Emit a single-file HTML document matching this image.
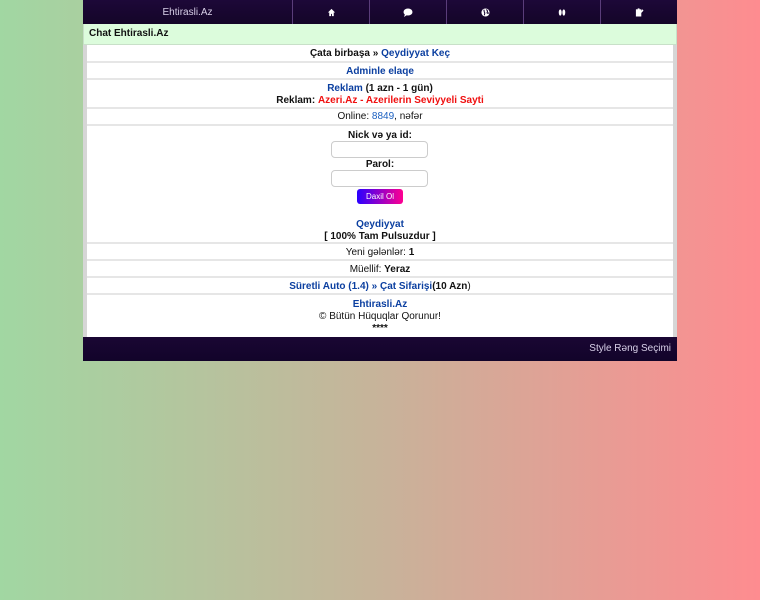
<!DOCTYPE html>
<html><head><meta charset="utf-8"><style>
html,body{margin:0;padding:0;width:760px;height:600px;overflow:hidden}
body{background:linear-gradient(to right,#a1d7a2,#c7b39a 50%,#fe8c90);font-family:"Liberation Sans",Arial,sans-serif;font-size:10px;color:#111}
#wrap{position:absolute;left:83px;top:0;width:594px}
.nav{height:24px;background:linear-gradient(#1d0838,#140528);display:flex}
.nav div{border-left:1px solid #5a3d7a;width:76px;display:flex;align-items:center;justify-content:center}
.nav .brand{border-left:none;width:209px;color:#d8d0e8;font-size:10px}
.hd{height:20px;background:#dcfcdc;border:1px solid #c8e0c8;border-top:none;line-height:20px;padding-left:5px;font-weight:bold;font-size:10px}
.box{background:#fff;border-left:4px solid #d6d6d6;border-right:4px solid #d6d6d6}
.r{border-bottom:2px solid #e6e6e6;text-align:center;box-sizing:border-box}
a{color:#0b3fa0;font-weight:bold;text-decoration:none}
b{color:#111}
.red{color:#f01010;font-weight:bold}
.ab{position:absolute;left:0;right:0;text-align:center;line-height:12px}
.inp{position:absolute;left:244px;width:97px;height:17px;border:1px solid #ccc;border-radius:4px;box-sizing:border-box;background:#fff}
.btn{position:absolute;left:270px;width:46px;height:15px;line-height:15px;border-radius:3px;background:linear-gradient(to right,#2a00ff,#ff0090);color:#fff;font-size:8px;text-align:center}
.ft{height:24px;background:linear-gradient(#1a0633,#12042a);color:#d8d0e8;text-align:right;line-height:24px;padding-right:6px;font-size:10px}
</style></head><body>
<div id="wrap">
<div class="nav">
<div class="brand">Ehtirasli.Az</div>
<div><svg width="9" height="9" viewBox="0 0 10 10"><path d="M5 1L1 5h1.5v4h2V6.5h1V9h2V5H9z" fill="#fff"/></svg></div>
<div><svg width="10" height="9" viewBox="0 0 10 9"><ellipse cx="5" cy="4" rx="4.5" ry="3.5" fill="#fff"/><path d="M2 6L1 9 4 7z" fill="#fff"/></svg></div>
<div><svg width="9" height="9" viewBox="0 0 10 10"><circle cx="5" cy="5" r="4.5" fill="#fff"/><path d="M3 2c1 1 0 2 1 3s-1 2 0 3M6 1.5c0 1 2 1 1 3s1 1 2 1" stroke="#1a0733" stroke-width="1.2" fill="none"/></svg></div>
<div><svg width="10" height="9" viewBox="0 0 10 10"><ellipse cx="3" cy="5" rx="1.6" ry="3.5" fill="#fff"/><ellipse cx="7" cy="5" rx="1.6" ry="3.5" fill="#fff"/></svg></div>
<div><svg width="9" height="10" viewBox="0 0 10 10"><path d="M1 2h6v8H1z" fill="#fff"/><path d="M3 1h2v2H3z" fill="#fff"/><path d="M8 2l1.5 1.5L6 7 5 7.5 5.5 6z" fill="#fff"/></svg></div>
</div>
<div class="hd">Chat Ehtirasli.Az</div>
<div class="box">
<div class="r" style="height:18px;line-height:18px"><b>Çata birbaşa »</b> <a>Qeydiyyat Keç</a></div>
<div class="r" style="height:17px;line-height:17px"><a>Adminle elaqe</a></div>
<div class="r" style="height:29px;padding-top:3px;line-height:12px"><a>Reklam</a> <b>(1 azn - 1 gün)</b><br><b>Reklam:</b> <span class="red">Azeri.Az - Azerilerin Seviyyeli Sayti</span></div>
<div class="r" style="height:17px;line-height:16px">Online: <a style="font-weight:normal;color:#1a5fc0">8849</a>, nəfər</div>
<div class="r" style="height:118px;position:relative">
<div class="ab" style="top:4px"><b>Nick və ya id:</b></div>
<div class="inp" style="top:15px"></div>
<div class="ab" style="top:33px"><b>Parol:</b></div>
<div class="inp" style="top:44px"></div>
<div class="btn" style="top:63px">Daxil Ol</div>
<div class="ab" style="top:93px"><a>Qeydiyyat</a></div>
<div class="ab" style="top:105px"><b>[ 100% Tam Pulsuzdur ]</b></div>
</div>
<div class="r" style="height:17px;line-height:17px">Yeni gələnlər: <b>1</b></div>
<div class="r" style="height:17px;line-height:17px">Müellif: <b>Yeraz</b></div>
<div class="r" style="height:17px;line-height:17px"><a>Süretli Auto (1.4) » Çat Sifarişi</a><b>(10 Azn</b>)</div>
<div style="height:42px;text-align:center;line-height:12px;padding-top:4px;box-sizing:border-box"><a>Ehtirasli.Az</a><br>© Bütün Hüquqlar Qorunur!<br><b>****</b></div>
</div>
<div class="ft">Style Rəng Seçimi</div>
</div>
</body></html>
